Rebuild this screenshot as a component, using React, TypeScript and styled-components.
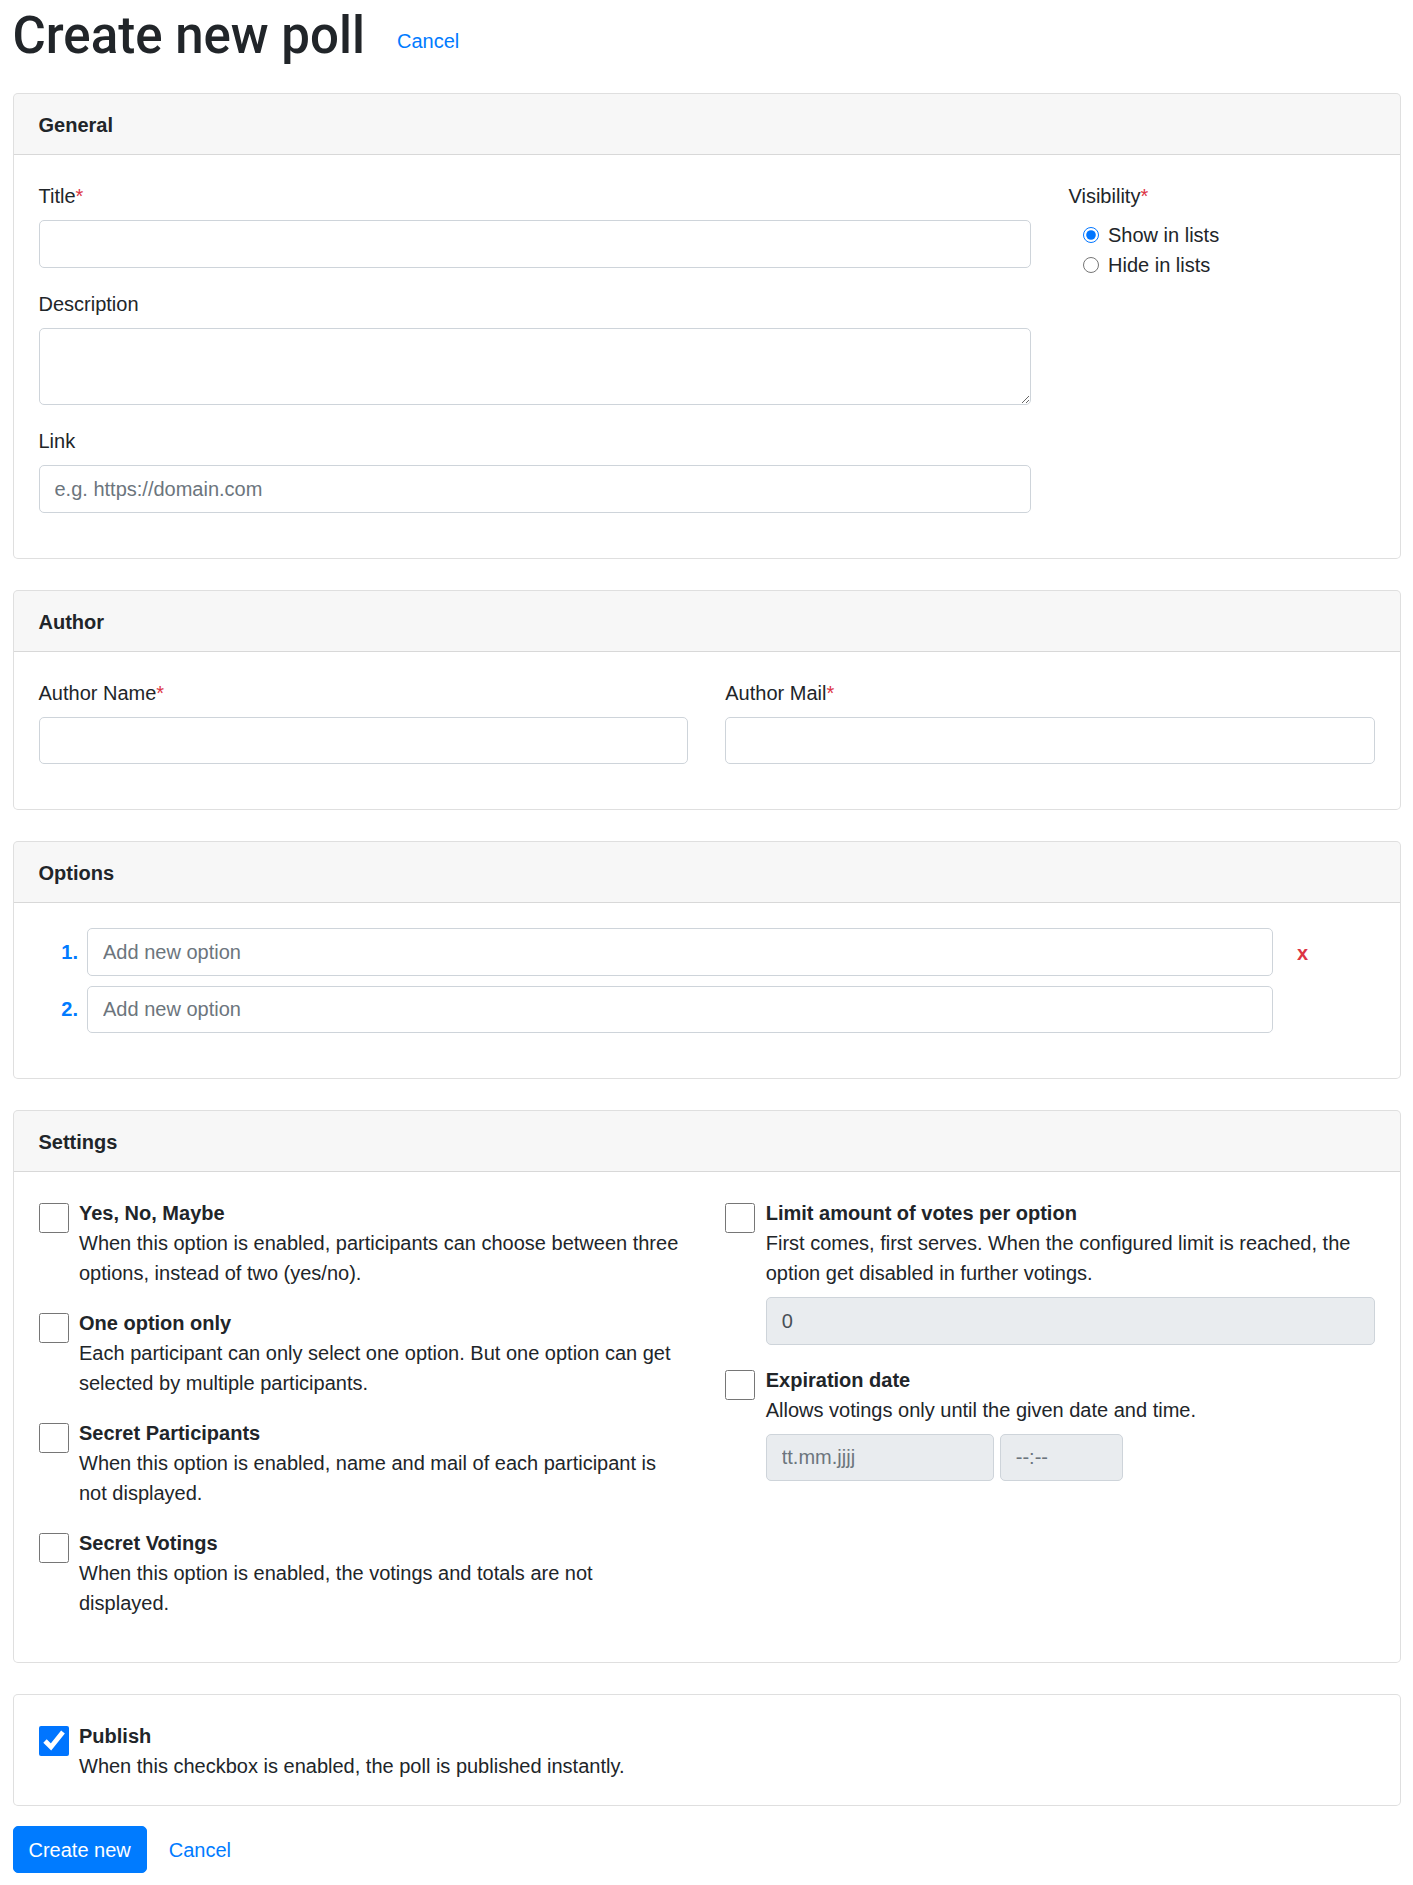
import React from "react";
import styled, { createGlobalStyle, css } from "styled-components";

const GlobalStyle = createGlobalStyle`
  * {
    box-sizing: border-box;
  }

  html,
  body {
    margin: 0;
    padding: 0;
    background: #fff;
  }

  body {
    font-family: "Liberation Sans", Arial, sans-serif;
    font-size: 20px;
    line-height: 30px;
    color: #212529;
  }
`;

const Page = styled.div`
  padding: 6px 12.5px 13px;
`;

const HeadingRow = styled.div`
  display: flex;
  align-items: center;
  margin-bottom: 27px;
`;

const Heading = styled.h1`
  margin: 0;
  font-family: Roboto, "Liberation Sans", sans-serif;
  font-size: 51px;
  line-height: 60px;
  font-weight: 500;
  color: #212529;
`;

const HeadingLink = styled.a`
  margin: 10px 0 0 32px;
  color: #007bff;
  text-decoration: none;
  cursor: pointer;
`;

const CardStack = styled.div`
  display: flex;
  flex-direction: column;
  gap: 31px;
`;

const Card = styled.section`
  border: 1px solid rgba(0, 0, 0, 0.125);
  border-radius: 5px;
  background: #fff;
`;

const CardHeader = styled.div`
  padding: 16px 25px 14px;
  background: rgba(0, 0, 0, 0.03);
  border-bottom: 1px solid rgba(0, 0, 0, 0.125);
  border-radius: 4px 4px 0 0;
  font-weight: 700;
`;

const CardBody = styled.div`
  padding: 25px;
`;

const Columns = styled.div<{ $side?: string }>`
  display: grid;
  grid-template-columns: ${(p) => (p.$side ? `minmax(0, 1fr) ${p.$side}` : "repeat(2, minmax(0, 1fr))")};
  column-gap: 37.5px;
`;

const FormGroup = styled.div`
  margin-bottom: 20px;
`;

const Label = styled.label`
  display: block;
  padding-top: 1px;
  margin-bottom: 9px;
`;

const Required = styled.span`
  color: #dc3545;
`;

const fieldStyle = css`
  display: block;
  width: 100%;
  padding: 8px 15px 7px;
  font-family: inherit;
  font-size: 20px;
  line-height: 30px;
  color: #495057;
  background: #fff;
  border: 1px solid #ced4da;
  border-radius: 5px;
  outline: none;

  &::placeholder {
    color: #6c757d;
    opacity: 1;
  }

  &:disabled {
    background: #e9ecef;
  }
`;

const Input = styled.input<{ $width?: number }>`
  ${fieldStyle}
  height: 47.5px;
  ${(p) => p.$width && `width: ${p.$width}px; flex: none;`}
`;

const TextArea = styled.textarea`
  ${fieldStyle}
  height: 77.5px;
  resize: vertical;
`;

const RadioGroup = styled.div`
  padding-left: 14.5px;
`;

const RadioRow = styled.label`
  display: flex;
  align-items: center;
  gap: 9px;
  height: 30px;
`;

const Radio = styled.input.attrs({ type: "radio" })`
  width: 16px;
  height: 16px;
  margin: 0;
  accent-color: #0075ff;
`;

const OptionList = styled.div`
  display: grid;
  row-gap: 10px;
  margin-bottom: 20px;
`;

const OptionRow = styled.div`
  display: grid;
  grid-template-columns: 48.5px minmax(0, 1fr) 101.5px;
  align-items: center;
`;

const OptionNumber = styled.span`
  padding-right: 9px;
  text-align: right;
  font-weight: 700;
  color: #007bff;
`;

const RemoveButton = styled.button`
  justify-self: start;
  padding: 3px 0 0 24px;
  border: 0;
  background: none;
  font-family: inherit;
  font-size: 20px;
  line-height: 30px;
  font-weight: 700;
  color: #dc3545;
  cursor: pointer;
`;

const CheckItem = styled.div<{ $flush?: boolean }>`
  display: flex;
  gap: 10.5px;
  margin-bottom: ${(p) => (p.$flush ? 0 : 20)}px;
`;

const Checkbox = styled.input.attrs({ type: "checkbox" })`
  flex: none;
  width: 30px;
  height: 30px;
  margin: 6px 0 0;
  accent-color: #0075ff;
`;

const CheckText = styled.div`
  flex: 1;
  min-width: 0;
  padding-top: 1px;
  margin-bottom: -1px;
`;

const CheckTitle = styled.div`
  font-weight: 700;
`;

const Extra = styled.div`
  display: flex;
  gap: 6px;
  margin-top: 9px;
`;

const Actions = styled.div`
  display: flex;
  align-items: center;
  gap: 22px;
  margin-top: 20px;
`;

const PrimaryButton = styled.button`
  padding: 8px 15px 7px;
  font-family: inherit;
  font-size: 20px;
  line-height: 30px;
  color: #fff;
  background: #007bff;
  border: 1px solid #007bff;
  border-radius: 5px;
  cursor: pointer;
`;

const TextLink = styled.a`
  padding-top: 1px;
  color: #007bff;
  text-decoration: none;
  cursor: pointer;
`;

type CheckProps = {
  title: string;
  text: string;
  checked?: boolean;
  flush?: boolean;
  children?: React.ReactNode;
};

const CheckOption = ({ title, text, checked, flush, children }: CheckProps) => (
  <CheckItem $flush={flush}>
    <Checkbox defaultChecked={checked} />
    <CheckText>
      <CheckTitle>{title}</CheckTitle>
      <div>{text}</div>
      {children}
    </CheckText>
  </CheckItem>
);

const App = () => (
  <>
    <GlobalStyle />
    <Page>
      <HeadingRow>
        <Heading>Create new poll</Heading>
        <HeadingLink>Cancel</HeadingLink>
      </HeadingRow>

      <CardStack>
        <Card>
          <CardHeader>General</CardHeader>
          <CardBody>
            <Columns $side="306px">
              <div>
                <FormGroup>
                  <Label>
                    Title<Required>*</Required>
                  </Label>
                  <Input />
                </FormGroup>
                <FormGroup>
                  <Label>Description</Label>
                  <TextArea />
                </FormGroup>
                <FormGroup>
                  <Label>Link</Label>
                  <Input placeholder="e.g. https://domain.com" />
                </FormGroup>
              </div>
              <div>
                <Label>
                  Visibility<Required>*</Required>
                </Label>
                <RadioGroup>
                  <RadioRow>
                    <Radio name="visibility" defaultChecked />
                    Show in lists
                  </RadioRow>
                  <RadioRow>
                    <Radio name="visibility" />
                    Hide in lists
                  </RadioRow>
                </RadioGroup>
              </div>
            </Columns>
          </CardBody>
        </Card>

        <Card>
          <CardHeader>Author</CardHeader>
          <CardBody>
            <Columns>
              <FormGroup>
                <Label>
                  Author Name<Required>*</Required>
                </Label>
                <Input />
              </FormGroup>
              <FormGroup>
                <Label>
                  Author Mail<Required>*</Required>
                </Label>
                <Input />
              </FormGroup>
            </Columns>
          </CardBody>
        </Card>

        <Card>
          <CardHeader>Options</CardHeader>
          <CardBody>
            <OptionList>
              <OptionRow>
                <OptionNumber>1.</OptionNumber>
                <Input placeholder="Add new option" />
                <RemoveButton type="button">x</RemoveButton>
              </OptionRow>
              <OptionRow>
                <OptionNumber>2.</OptionNumber>
                <Input placeholder="Add new option" />
              </OptionRow>
            </OptionList>
          </CardBody>
        </Card>

        <Card>
          <CardHeader>Settings</CardHeader>
          <CardBody>
            <Columns>
              <div>
                <CheckOption
                  title="Yes, No, Maybe"
                  text="When this option is enabled, participants can choose between three options, instead of two (yes/no)."
                />
                <CheckOption
                  title="One option only"
                  text="Each participant can only select one option. But one option can get selected by multiple participants."
                />
                <CheckOption
                  title="Secret Participants"
                  text="When this option is enabled, name and mail of each participant is not displayed."
                />
                <CheckOption
                  title="Secret Votings"
                  text="When this option is enabled, the votings and totals are not displayed."
                />
              </div>
              <div>
                <CheckOption
                  title="Limit amount of votes per option"
                  text="First comes, first serves. When the configured limit is reached, the option get disabled in further votings."
                >
                  <Extra>
                    <Input disabled defaultValue="0" />
                  </Extra>
                </CheckOption>
                <CheckOption
                  title="Expiration date"
                  text="Allows votings only until the given date and time."
                >
                  <Extra>
                    <Input disabled $width={228} placeholder="tt.mm.jjjj" />
                    <Input disabled $width={123} placeholder="--:--" />
                  </Extra>
                </CheckOption>
              </div>
            </Columns>
          </CardBody>
        </Card>

        <Card>
          <CardBody>
            <CheckOption
              flush
              checked
              title="Publish"
              text="When this checkbox is enabled, the poll is published instantly."
            />
          </CardBody>
        </Card>
      </CardStack>

      <Actions>
        <PrimaryButton type="button">Create new</PrimaryButton>
        <TextLink>Cancel</TextLink>
      </Actions>
    </Page>
  </>
);

export default App;
